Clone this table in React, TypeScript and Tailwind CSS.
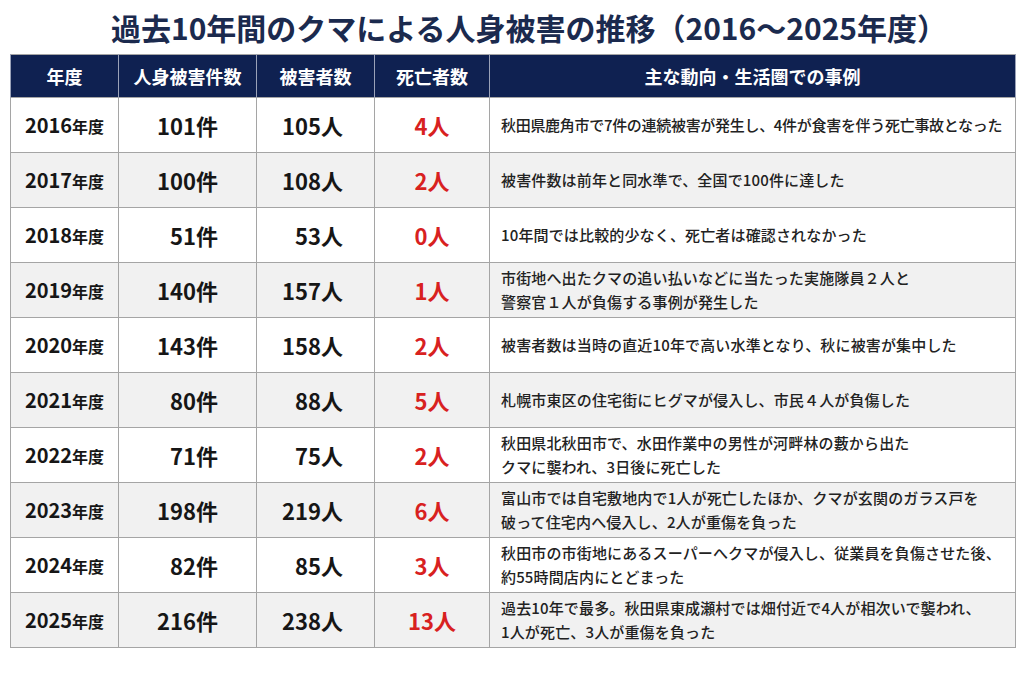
import React from 'react';

type Row = {
  year: string;
  cases: string;
  victims: string;
  deaths: string;
  note: string[];
  tight?: boolean;
};

const rows: Row[] = [
  { year: '2016', cases: '101', victims: '105', deaths: '4', note: ['秋田県鹿角市で7件の連続被害が発生し、4件が食害を伴う死亡事故となった'], tight: true },
  { year: '2017', cases: '100', victims: '108', deaths: '2', note: ['被害件数は前年と同水準で、全国で100件に達した'] },
  { year: '2018', cases: '51', victims: '53', deaths: '0', note: ['10年間では比較的少なく、死亡者は確認されなかった'] },
  { year: '2019', cases: '140', victims: '157', deaths: '1', note: ['市街地へ出たクマの追い払いなどに当たった実施隊員２人と', '警察官１人が負傷する事例が発生した'] },
  { year: '2020', cases: '143', victims: '158', deaths: '2', note: ['被害者数は当時の直近10年で高い水準となり、秋に被害が集中した'] },
  { year: '2021', cases: '80', victims: '88', deaths: '5', note: ['札幌市東区の住宅街にヒグマが侵入し、市民４人が負傷した'] },
  { year: '2022', cases: '71', victims: '75', deaths: '2', note: ['秋田県北秋田市で、水田作業中の男性が河畔林の藪から出た', 'クマに襲われ、3日後に死亡した'] },
  { year: '2023', cases: '198', victims: '219', deaths: '6', note: ['富山市では自宅敷地内で1人が死亡したほか、クマが玄関のガラス戸を', '破って住宅内へ侵入し、2人が重傷を負った'] },
  { year: '2024', cases: '82', victims: '85', deaths: '3', note: ['秋田市の市街地にあるスーパーへクマが侵入し、従業員を負傷させた後、', '約55時間店内にとどまった'] },
  { year: '2025', cases: '216', victims: '238', deaths: '13', note: ['過去10年で最多。秋田県東成瀬村では畑付近で4人が相次いで襲われ、', '1人が死亡、3人が重傷を負った'] },
];

const headers = ['年度', '人身被害件数', '被害者数', '死亡者数', '主な動向・生活圏での事例'];
const widths = ['w-[108px]', 'w-[138px]', 'w-[118px]', 'w-[115px]', 'w-[526px]'];

export default function App() {
  return (
    <div
      className="w-[1024px] h-[683px] bg-white overflow-hidden"
      style={{ fontFamily: '"Noto Sans CJK JP", "Noto Sans", sans-serif' }}
    >
      <h1 className="pt-[9px] pl-[34px] h-[45px] text-center text-[30px] leading-[36px] font-bold text-[#1b2a4e]">
        過去10年間のクマによる人身被害の推移（2016～2025年度）
      </h1>

      <table className="ml-[10px] mt-[9px] w-[1005px] table-fixed border-collapse border border-[#a5a5a5]">
        <thead>
          <tr className="h-[43px] bg-[#0f2151] text-white">
            {headers.map((h, i) => (
              <th
                key={h}
                className={`${widths[i]} border-x border-[#9aa2b8] text-center text-[18px] font-bold leading-none`}
              >
                {h}
              </th>
            ))}
          </tr>
        </thead>
        <tbody>
          {rows.map((r, i) => (
            <tr
              key={r.year}
              className={`h-[55px] border-t border-[#a5a5a5] ${i % 2 === 1 ? 'bg-[#f1f1f1]' : 'bg-white'}`}
            >
              <td className="border-r border-[#a5a5a5] text-center font-bold text-[#161616] leading-none">
                <span className="text-[20px]">{r.year}</span>
                <span className="text-[16px]">年度</span>
              </td>
              <td className="border-r border-[#a5a5a5] pr-[38px] text-right text-[22px] font-bold text-[#161616] leading-none">
                {r.cases}件
              </td>
              <td className="border-r border-[#a5a5a5] pr-[31px] text-right text-[22px] font-bold text-[#161616] leading-none">
                {r.victims}人
              </td>
              <td className="border-r border-[#a5a5a5] text-center text-[22px] font-bold text-[#d8211f] leading-none">
                {r.deaths}人
              </td>
              <td
                className={`pl-[11px] pr-[4px] text-[15px] leading-[24px] font-medium text-[#222222] ${
                  r.tight ? 'tracking-[-0.02em]' : 'tracking-[0.01em]'
                }`}
              >
                {r.note.map((line) => (
                  <div key={line} className="whitespace-nowrap">
                    {line}
                  </div>
                ))}
              </td>
            </tr>
          ))}
        </tbody>
      </table>
    </div>
  );
}
